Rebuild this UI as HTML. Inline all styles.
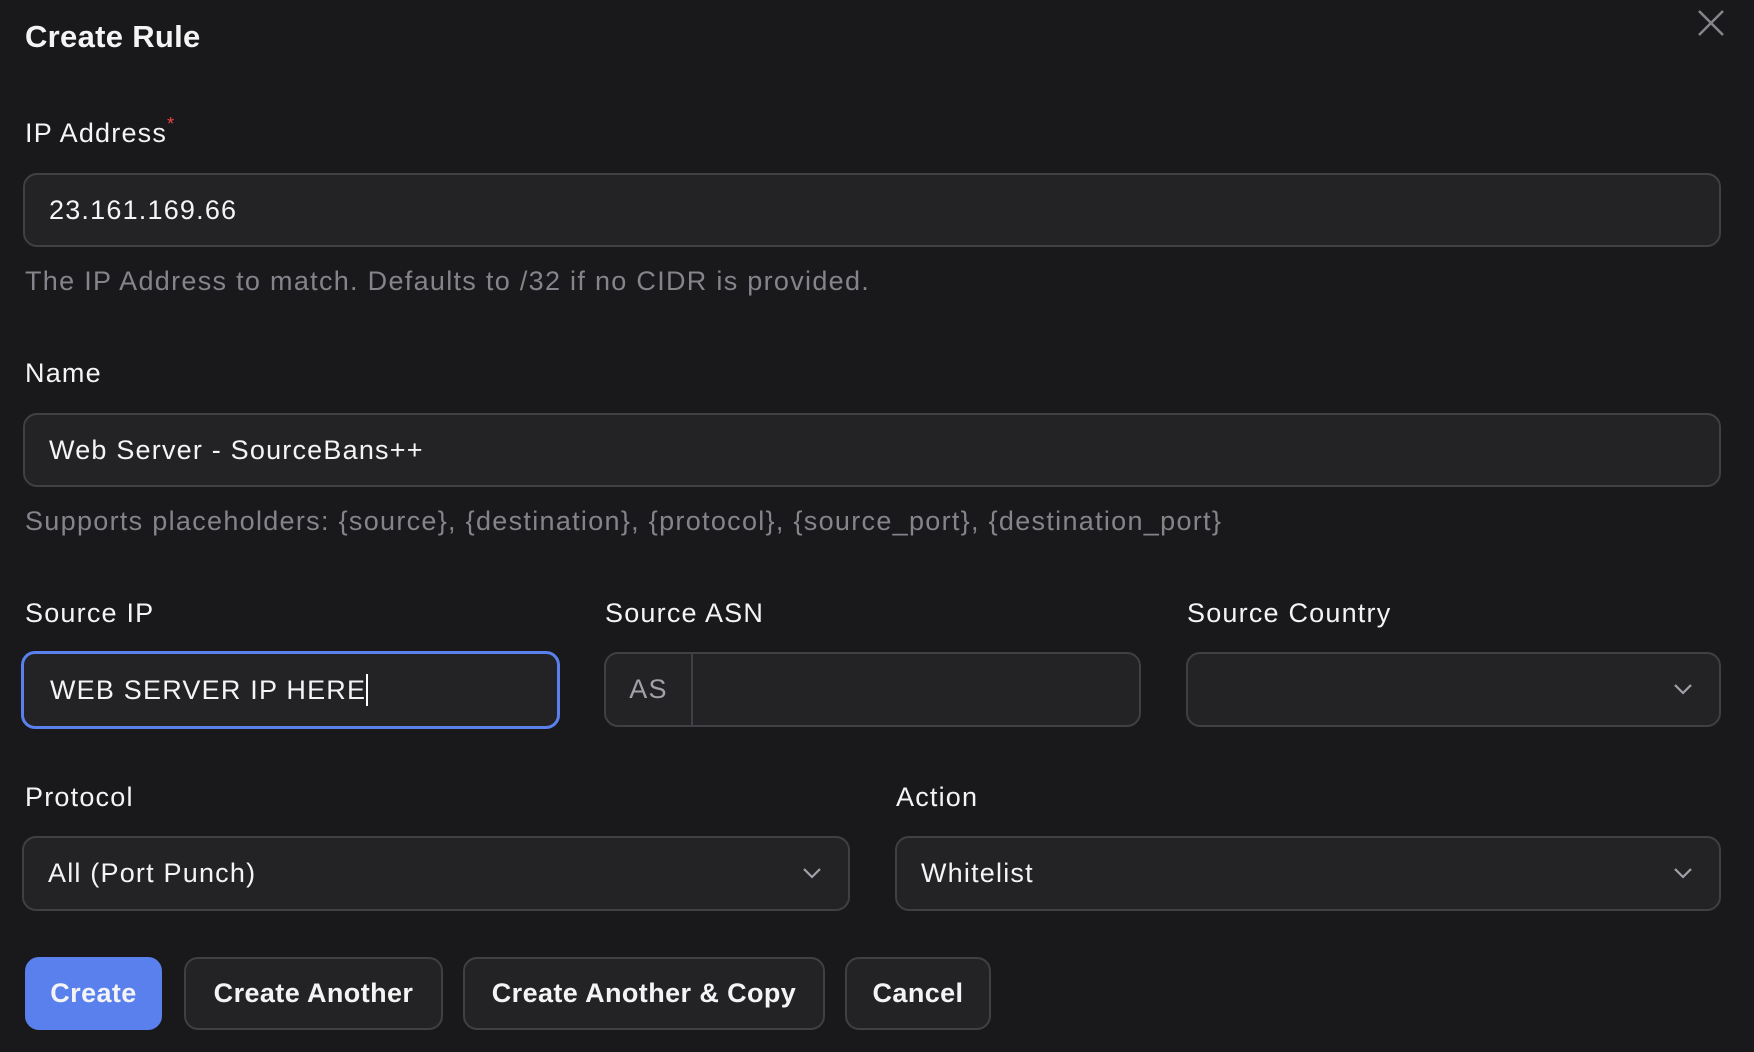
<!DOCTYPE html>
<html><head><meta charset="utf-8"><style>
*{box-sizing:border-box;margin:0;padding:0}
body{width:1754px;height:1052px;background:#19191c;font-family:"Liberation Sans",sans-serif;color:#f4f4f5;position:relative;overflow:hidden}
.a{position:absolute}
.t{font-size:31px;font-weight:bold;left:25px;top:19px;letter-spacing:0.3px}
.l{font-size:27px;left:25px;white-space:nowrap;letter-spacing:1.2px}
.in{position:absolute;background:#232326;border:2px solid #404044;border-radius:14px;font-size:27px;letter-spacing:1.2px;display:flex;align-items:center;padding-left:24px;white-space:nowrap}
.h{font-size:27px;color:#84848b;left:25px;white-space:nowrap;letter-spacing:1.3px}
.btn{position:absolute;top:957px;height:73px;border:2px solid #404044;border-radius:14px;background:#232326;font-size:27px;font-weight:bold;letter-spacing:0.4px;display:flex;align-items:center;justify-content:center}
.chev{position:absolute;right:26px;top:50%;margin-top:-7px}
</style></head><body>
<div class="a t">Create Rule</div>
<svg class="a" style="left:1697px;top:9px" width="28" height="28" viewBox="0 0 28 28"><path d="M2 2L26 26M26 2L2 26" stroke="#85858b" stroke-width="2.5"/></svg>
<div class="a l" style="top:118px">IP Address<span style="color:#ef4444;font-size:18px;vertical-align:top;position:relative;top:-4px">*</span></div>
<div class="in" style="left:23px;top:173px;width:1698px;height:74px">23.161.169.66</div>
<div class="a h" style="top:266px">The IP Address to match. Defaults to /32 if no CIDR is provided.</div>
<div class="a l" style="top:358px">Name</div>
<div class="in" style="left:23px;top:413px;width:1698px;height:74px">Web Server - SourceBans++</div>
<div class="a h" style="top:506px">Supports placeholders: {source}, {destination}, {protocol}, {source_port}, {destination_port}</div>
<div class="a l" style="top:598px">Source IP</div>
<div class="a l" style="top:598px;left:605px">Source ASN</div>
<div class="a l" style="top:598px;left:1187px">Source Country</div>
<div class="in" style="left:21px;top:651px;width:539px;height:78px;border:3px solid #5a80ee;padding-left:26px">WEB SERVER IP HERE<span style="display:inline-block;width:2px;height:32px;background:#fff;margin-left:0px"></span></div>
<div class="in" style="left:604px;top:652px;width:537px;height:75px;padding-left:0"><div style="width:87px;height:100%;border-right:2px solid #404044;display:flex;align-items:center;justify-content:center;color:#a1a1aa">AS</div></div>
<div class="in" style="left:1186px;top:652px;width:535px;height:75px"><svg class="chev" width="20" height="12" viewBox="0 0 20 12"><path d="M2 2L10 10L18 2" fill="none" stroke="#a1a1aa" stroke-width="2.2"/></svg></div>
<div class="a l" style="top:782px">Protocol</div>
<div class="a l" style="top:782px;left:896px">Action</div>
<div class="in" style="left:22px;top:836px;width:828px;height:75px">All (Port Punch)<svg class="chev" width="20" height="12" viewBox="0 0 20 12"><path d="M2 2L10 10L18 2" fill="none" stroke="#a1a1aa" stroke-width="2.2"/></svg></div>
<div class="in" style="left:895px;top:836px;width:826px;height:75px">Whitelist<svg class="chev" width="20" height="12" viewBox="0 0 20 12"><path d="M2 2L10 10L18 2" fill="none" stroke="#a1a1aa" stroke-width="2.2"/></svg></div>
<div class="btn" style="left:25px;width:137px;background:#5a80ee;border-color:#5a80ee">Create</div>
<div class="btn" style="left:184px;width:259px">Create Another</div>
<div class="btn" style="left:463px;width:362px">Create Another &amp; Copy</div>
<div class="btn" style="left:845px;width:146px">Cancel</div>
</body></html>
